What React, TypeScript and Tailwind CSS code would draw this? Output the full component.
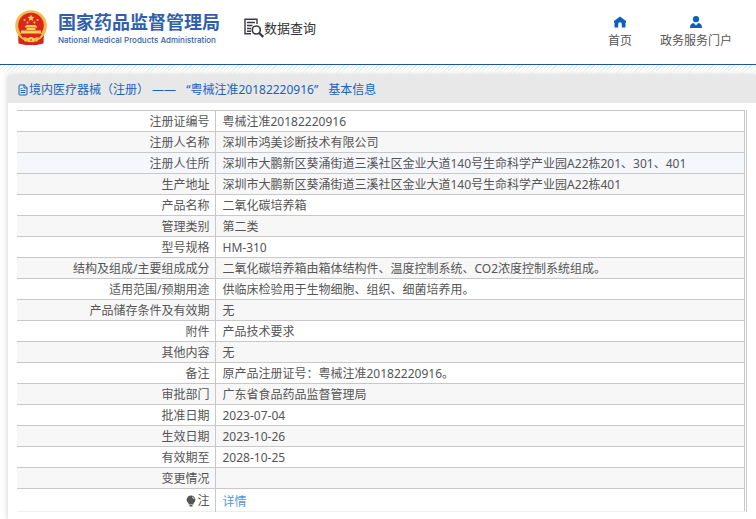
import { FiFileText } from "react-icons/fi";

const rows = [
  { label: "注册证编号", value: "粤械注准20182220916" },
  { label: "注册人名称", value: "深圳市鸿美诊断技术有限公司" },
  {
    label: "注册人住所",
    value:
      "深圳市大鹏新区葵涌街道三溪社区金业大道140号生命科学产业园A22栋201、301、401",
    active: true,
  },
  {
    label: "生产地址",
    value: "深圳市大鹏新区葵涌街道三溪社区金业大道140号生命科学产业园A22栋401",
  },
  { label: "产品名称", value: "二氧化碳培养箱" },
  { label: "管理类别", value: "第二类" },
  { label: "型号规格", value: "HM-310" },
  {
    label: "结构及组成/主要组成成分",
    value: "二氧化碳培养箱由箱体结构件、温度控制系统、CO2浓度控制系统组成。",
  },
  {
    label: "适用范围/预期用途",
    value: "供临床检验用于生物细胞、组织、细菌培养用。",
  },
  { label: "产品储存条件及有效期", value: "无" },
  { label: "附件", value: "产品技术要求" },
  { label: "其他内容", value: "无" },
  { label: "备注", value: "原产品注册证号：粤械注准20182220916。" },
  { label: "审批部门", value: "广东省食品药品监督管理局" },
  { label: "批准日期", value: "2023-07-04" },
  { label: "生效日期", value: "2023-10-26" },
  { label: "有效期至", value: "2028-10-25" },
  { label: "变更情况", value: "" },
];

function Emblem() {
  return (
    <svg viewBox="0 0 34 36" className="h-9 w-[34px] shrink-0" aria-hidden="true">
      <path d="M4 23 4.500 33.500l7 1.500h11l7-1.500L30 23z" fill="#d8251c" />
      <circle cx="17" cy="16" r="15.800" fill="#f0bd4a" />
      <circle cx="17" cy="15.500" r="12.800" fill="#dc261d" />
      <path
        d="m17 4.500 1 2.300 2.500.2-1.900 1.600.6 2.400-2.200-1.300L14.800 11l.6-2.400L13.500 7l2.500-.2z"
        fill="#f7d254"
      />
      <g fill="#f7d254">
        <circle cx="10.500" cy="10" r="1" />
        <circle cx="13.500" cy="12.500" r="1" />
        <circle cx="20.500" cy="12.500" r="1" />
        <circle cx="23.500" cy="10" r="1" />
        <path d="M11 16.500 12.500 15h9l1.500 1.500v1H11zM12.500 18h9v2h-9zM7 20.500h20v3H7z" />
      </g>
      <path d="M6 24h22l-3 4H9z" fill="#dc261d" />
      <path d="M9 27.500q4-1 5 2h6q1-3 5-2l-1.500 4h-13z" fill="#f0bd4a" />
      <circle cx="17" cy="30" r="3" fill="#f7d254" />
      <circle cx="17" cy="30" r="1.200" fill="#e0862c" />
      <path d="m12 33 5-1 5 1v2H12z" fill="#d8251c" />
    </svg>
  );
}

function SearchDocIcon() {
  return (
    <svg
      viewBox="0 0 20 20"
      className="size-5 shrink-0"
      fill="none"
      stroke="#3a3a44"
      strokeWidth="1.400"
      aria-hidden="true"
    >
      <path d="M13 6V1.200H1v14.600h6" />
      <path d="M3 4.500h8M3 7.500h5.500M3 10.500h4M3 13.200h4" />
      <circle cx="12.300" cy="12" r="4" strokeWidth="1.700" />
      <path d="m15.200 15 4 4" strokeWidth="2.400" />
    </svg>
  );
}

function HomeIcon() {
  return (
    <svg viewBox="0 0 12 12" className="size-3" fill="#0c5fbc" aria-hidden="true">
      <path d="M6 .5 0 5v1.500h.5v5h3.700V8a1.800 1.800 0 0 1 3.600 0v3.500h3.700v-5h.5V5z" />
    </svg>
  );
}

function UserIcon() {
  return (
    <svg viewBox="0 0 12 12" className="size-3" fill="#0c5fbc" aria-hidden="true">
      <circle cx="6" cy="3.200" r="3.100" />
      <path d="M0 12c0-3 1-4.500 3.800-5L6 9.500 8.200 7C11 7.500 12 9 12 12z" />
    </svg>
  );
}

function BulbIcon() {
  return (
    <svg viewBox="0 0 10 12" className="h-3 w-2.5" fill="#555" aria-hidden="true">
      <path d="M5 .5a4.300 4.300 0 0 0-2.500 7.800V9.500h5V8.300A4.300 4.300 0 0 0 5 .5zM3.500 10h3v1.500h-3z" />
      <path d="M6 2q1.800.4 2 2" stroke="#fff" fill="none" strokeWidth=".8" />
    </svg>
  );
}

export default function App() {
  return (
    <div className="bg-white font-['Noto_Sans','Noto_Sans_CJK_SC',sans-serif] text-xs text-[#555]">
      <header className="flex h-[65px] items-start justify-between border-b border-[#1d5799] pr-6 pl-3.5">
        <div className="flex items-start">
          <div className="flex items-start gap-2.5 pt-2.5">
            <Emblem />
            <div className="text-[#315fae]">
              <h1 className="text-lg leading-6 font-bold">国家药品监督管理局</h1>
              <p className="font-['Inter',sans-serif] text-[8px] leading-3 font-medium">
                National Medical Products Administration
              </p>
            </div>
          </div>
          <h2 className="ml-6 flex items-center pt-[18px] text-[13px] leading-4 text-[#333]">
            <SearchDocIcon />
            数据查询
          </h2>
        </div>
        <nav className="flex gap-7 pt-4">
          <a href="#home" className="flex flex-col items-center gap-[5px]">
            <HomeIcon />
            首页
          </a>
          <a href="#portal" className="flex flex-col items-center gap-[5px]">
            <UserIcon />
            政务服务门户
          </a>
        </nav>
      </header>
      <div className="h-2.5 bg-[repeating-linear-gradient(135deg,#d5ebf7_0_1px,#fff_1px_3px)] mask-b-from-10%" />

      <main className="ml-2 pb-2 shadow-[0_0_6px_#ccc]">
        <h3 className="flex h-7 items-center bg-[#e8e8e8] pt-0.5 pl-[9px] text-[#1b62bd]">
          <FiFileText className="size-3" />
          境内医疗器械（注册） ——
          <span className="ml-2.5">“粤械注准20182220916”</span>
          <span className="ml-2.5">基本信息</span>
        </h3>
        <div className="mt-[7px] mr-[9px] ml-[9px] border-r border-[#c8c8cb] pr-px">
          <table className="w-full border-collapse border-r border-[#c8c8cb]">
            <tbody>
              {rows.map((row) => (
                <tr
                  key={row.label}
                  className={
                    row.active
                      ? "h-[21px] border-t border-[#c8c8cb] bg-[#f5f7fc]"
                      : "h-[21px] border-t border-[#c8c8cb] even:bg-[#f7f7f7]"
                  }
                >
                  <th
                    scope="row"
                    className="w-[198px] border-r border-[#c8c8cb] pt-0.5 pr-[5px] text-right leading-[18px] font-normal"
                  >
                    {row.label}
                  </th>
                  <td className="pt-0.5 pl-[7px] leading-[18px]">{row.value}</td>
                </tr>
              ))}
              <tr className="h-[23px] border-y border-t-[#c8c8cb] border-b-[#eee]">
                <th
                  scope="row"
                  className="border-r border-[#c8c8cb] pt-0.5 pr-[5px] font-normal"
                >
                  <span className="flex items-center justify-end gap-px">
                    <BulbIcon />注
                  </span>
                </th>
                <td className="pt-1 pl-[7px]">
                  <a href="#detail" className="text-[#4a97e8]">
                    详情
                  </a>
                </td>
              </tr>
            </tbody>
          </table>
        </div>
      </main>
    </div>
  );
}
